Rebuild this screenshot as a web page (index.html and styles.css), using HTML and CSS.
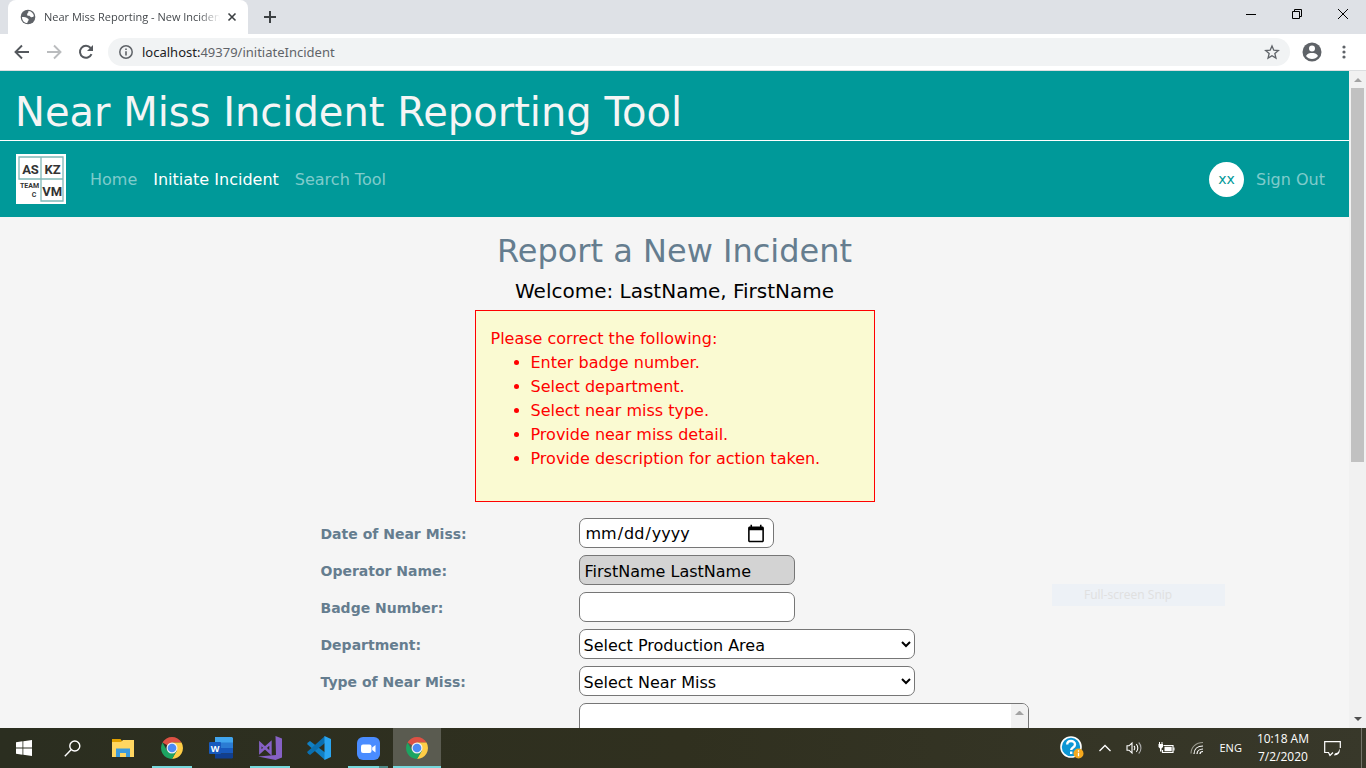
FILE: index.html
```html
<!DOCTYPE html>
<html lang="en">
<head>
<meta charset="utf-8">
<title>Near Miss Reporting - New Incident</title>
<link rel="stylesheet" href="styles.css">
</head>
<body>
<svg class="defs" aria-hidden="true">
  <symbol id="chrome" viewBox="0 0 24 24">
    <path fill="#dd5144" d="M12 12 2.5 6.5A11 11 0 0 1 21.500 6.500L12 6.500z"/>
    <path fill="#ffcd46" d="M12 6.500H21.500A11 11 0 0 1 12 23L16.800 14.800z"/>
    <path fill="#1da462" d="M2.500 6.500A11 11 0 0 0 12 23L16.800 14.800 12 17.500 7.200 14.700z"/>
    <circle cx="12" cy="12" r="5.500" fill="#f1f1f1"/>
    <circle cx="12" cy="12" r="4.300" fill="#4c8bf5"/>
  </symbol>
</svg>

<header class="tabstrip">
  <div class="tab">
    <svg class="favicon" viewBox="0 0 24 24"><circle cx="12" cy="12" r="11" fill="#5f6368"/><path fill="#fff" d="M3 12c2 0 5-.5 7 1 1.500 1.500 3 1 3 3s-2 2-2 5C6 21 3 17 3 12zM12 3c5 0 8 3 9 8-2 1-3 2-5 1-1-1-1-2-3-2s-3-1-2-3 3-2 1-4z"/></svg>
    <span class="tab-title">Near Miss Reporting - New Incident</span>
    <button class="icon-btn tab-close" aria-label="Close tab"><svg width="10" height="10" viewBox="0 0 10 10"><path d="M1.500 1.500l7 7M8.500 1.500l-7 7" stroke="#3c4043" stroke-width="1.600"/></svg></button>
  </div>
  <button class="icon-btn new-tab" aria-label="New tab"><svg width="12" height="12" viewBox="0 0 12 12"><path d="M6 0v12M0 6h12" stroke="#3c4043" stroke-width="2"/></svg></button>
  <div class="window-controls">
    <button class="icon-btn" aria-label="Minimize"><svg width="10" height="10" viewBox="0 0 10 10"><path d="M0 5.500h10" stroke="#000"/></svg></button>
    <button class="icon-btn" aria-label="Restore"><svg width="10" height="10" viewBox="0 0 10 10"><path d="M.5 2.500h7v7h-7zM2.500 2.500v-2h7v7h-2" fill="none" stroke="#000"/></svg></button>
    <button class="icon-btn" aria-label="Close"><svg width="10" height="10" viewBox="0 0 10 10"><path d="M0 0l10 10M10 0L0 10" stroke="#000"/></svg></button>
  </div>
</header>

<div class="toolbar">
  <button class="icon-btn nav-btn" aria-label="Back"><svg width="16" height="16" viewBox="0 0 16 16"><path d="M15 8H2M8 1.500L1.500 8 8 14.500" fill="none" stroke="#54585d" stroke-width="1.900"/></svg></button>
  <button class="icon-btn nav-btn" aria-label="Forward"><svg width="16" height="16" viewBox="0 0 16 16"><path d="M1 8h13M8 1.500L14.500 8 8 14.500" fill="none" stroke="#babcbe" stroke-width="1.900"/></svg></button>
  <button class="icon-btn nav-btn" aria-label="Reload"><svg width="16" height="16" viewBox="0 0 16 16"><path d="M13.500 10.200A6 6 0 1 1 12.600 4" fill="none" stroke="#54585d" stroke-width="2"/><path d="M15 1v6H9z" fill="#54585d"/></svg></button>
  <div class="address">
    <svg width="14" height="14" viewBox="0 0 14 14"><circle cx="7" cy="7" r="6.200" fill="none" stroke="#5f6368" stroke-width="1.500"/><path d="M7 6.200v4.200M7 3.500v1.600" stroke="#5f6368" stroke-width="1.600"/></svg>
    <span class="url"><b>localhost:</b>49379/initiateIncident</span>
    <button class="icon-btn star" aria-label="Bookmark"><svg width="16" height="16" viewBox="0 0 24 24"><path d="M12 3l2.700 6.300 6.800.6-5.200 4.500 1.600 6.700-5.900-3.600-5.900 3.600 1.600-6.700-5.200-4.500 6.800-.6z" fill="none" stroke="#5f6368" stroke-width="2"/></svg></button>
  </div>
  <button class="icon-btn profile" aria-label="Profile"><svg width="20" height="20" viewBox="0 0 20 20"><circle cx="10" cy="10" r="9.500" fill="#5f6368"/><circle cx="10" cy="6.500" r="3" fill="#fff"/><path d="M4 14c1-2.500 4-3 6-3s5 .5 6 3c-1.500 2-3.500 3-6 3s-4.500-1-6-3z" fill="#fff"/></svg></button>
  <button class="icon-btn menu" aria-label="Menu"><svg width="4" height="14" viewBox="0 0 4 14"><g fill="#5f6368"><circle cx="2" cy="2" r="1.600"/><circle cx="2" cy="7" r="1.600"/><circle cx="2" cy="12" r="1.600"/></g></svg></button>
</div>

<div class="viewport">
  <div class="page">
    <div class="banner"><h1>Near Miss Incident Reporting Tool</h1></div>
    <nav class="navbar">
      <a class="brand" href="#" aria-label="Team C">
        <svg width="50" height="50" viewBox="0 0 50 50"><rect width="50" height="50" fill="#fff"/><path d="M3 3h44v44H25V25H3zM25 3v22h22" fill="none" stroke="#7fb9b8" stroke-width="1.300"/><g class="logo-text"><text x="14.500" y="20" class="logo-big">AS</text><text x="36.500" y="20" class="logo-big">KZ</text><text x="36.300" y="42" class="logo-big">VM</text><text x="13.500" y="34" class="logo-small">TEAM</text><text x="18" y="43" class="logo-small">C</text></g></svg>
      </a>
      <a class="nav-link" href="#">Home</a>
      <a class="nav-link active" href="#">Initiate Incident</a>
      <a class="nav-link" href="#">Search Tool</a>
      <span class="avatar">XX</span>
      <a class="nav-link sign-out" href="#">Sign Out</a>
    </nav>
    <main>
      <h2>Report a New Incident</h2>
      <p class="welcome">Welcome: LastName, FirstName</p>
      <div class="errors">
        Please correct the following:
        <ul>
          <li>Enter badge number.</li>
          <li>Select department.</li>
          <li>Select near miss type.</li>
          <li>Provide near miss detail.</li>
          <li>Provide description for action taken.</li>
        </ul>
      </div>
      <form class="form">
        <label for="date">Date of Near Miss:</label>
        <input class="field date" id="date" type="date">
        <label for="operator">Operator Name:</label>
        <input class="field text readonly" id="operator" type="text" value="FirstName LastName" readonly>
        <label for="badge">Badge Number:</label>
        <input class="field text" id="badge" type="text">
        <label for="department">Department:</label>
        <select class="field select" id="department"><option>Select Production Area</option></select>
        <label for="type">Type of Near Miss:</label>
        <select class="field select" id="type"><option>Select Near Miss</option></select>
        <div class="detail">
          <textarea aria-label="Near miss detail"></textarea>
          <div class="detail-bar"><i class="arrow up"></i></div>
        </div>
      </form>
    </main>
  </div>
  <div class="scrollbar"><i class="arrow up"></i><div class="track"><div class="thumb"></div></div><i class="arrow down"></i></div>
  <div class="snip">Full-screen Snip</div>
</div>

<footer class="taskbar">
  <button class="task" aria-label="Start"><svg width="16" height="16" viewBox="0 0 16 16"><path fill="#fff" d="M0 2.200l6.500-.9v6.200H0zM7.300 1.200L16 0v7.500H7.300zM0 8.400h6.500v6.300L0 13.800zM7.300 8.400H16V16l-8.700-1.200z"/></svg></button>
  <button class="task" aria-label="Search"><svg width="17" height="17" viewBox="0 0 17 17"><circle cx="10.800" cy="6" r="5" fill="none" stroke="#fff" stroke-width="1.400"/><path d="M7.300 9.600L.8 16.200" stroke="#fff" stroke-width="1.400"/></svg></button>
  <div class="pinned">
    <button class="task" aria-label="File Explorer"><svg width="22" height="20" viewBox="0 0 22 20"><path fill="#e2a100" d="M0 1h8.500l1.500 2v4H0z"/><path fill="#ffd661" d="M0 4h9l2-2h11v17H0z"/><path fill="#3d9bdc" d="M4 19v-8.500h14V19h-4v-4H8v4z"/></svg></button>
    <button class="task running" aria-label="Chrome"><svg width="24" height="24"><use href="#chrome"/></svg></button>
    <button class="task" aria-label="Word"><svg width="24" height="22" viewBox="0 0 24 22"><path fill="#41a5ee" d="M6 0h17l1 1v5H6z"/><path fill="#2b7cd3" d="M6 5.500h18V11H6z"/><path fill="#185abd" d="M6 11h18v5.500H6z"/><path fill="#103f91" d="M6 16.500h18V21l-1 .500H6z"/><rect y="5" width="12" height="12" rx="1" fill="#185abd"/><text x="6" y="14.500" class="word-letter">W</text></svg></button>
    <button class="task running" aria-label="Visual Studio"><svg width="24" height="24" viewBox="0 0 24 24"><path fill="#8661c5" d="M17.500 0L24 2.500v19L17.500 24 0 20.500l18-1.500z"/><path d="M2.300 7.500v8.500l10.200-9v10z" fill="none" stroke="#8661c5" stroke-width="2.400"/></svg></button>
    <button class="task" aria-label="Visual Studio Code"><svg width="24" height="24" viewBox="0 0 24 24"><path fill="#1180c4" d="M1 6.500L3 5l15 11.500V24L0 8z"/><path fill="#0a6fb0" d="M1 17.500L3 19 18 7V0L0 16z"/><path fill="#2aa5f0" d="M17.500 0L24 3v18l-6.500 3z"/></svg></button>
    <button class="task running grouped" aria-label="Zoom"><svg width="23" height="23" viewBox="0 0 23 23"><rect width="23" height="23" rx="6" fill="#4a8cff"/><rect x="4" y="7.500" width="10.500" height="8.500" rx="2" fill="#fff"/><path fill="#fff" d="M15.200 10.500l3.300-2.500v7.500l-3.300-2.500z"/></svg></button>
    <button class="task current" aria-label="Chrome, active window"><svg width="24" height="24"><use href="#chrome"/></svg></button>
  </div>
  <div class="tray">
    <svg width="24" height="24" viewBox="0 0 24 24"><circle cx="11" cy="11" r="10" fill="#0d96d4" stroke="#fff" stroke-width="1.600"/><path d="M7.200 8.500C7.200 6 9 5 11 5s4 1.200 4 3.500c0 3-3.800 2.800-3.800 5.500M11.200 15.500v2.500" fill="none" stroke="#fff" stroke-width="2.400"/><circle cx="18.500" cy="17.500" r="5" fill="#f5a81c"/><path d="M18.500 16.800v3.500M18.500 14.200v1.500" stroke="#fff" stroke-width="1.300"/></svg>
    <svg width="12" height="8" viewBox="0 0 12 8"><path d="M.5 7L6 1.500 11.500 7" fill="none" stroke="#fff" stroke-width="1.300"/></svg>
    <svg width="17" height="14" viewBox="0 0 17 14"><path d="M1 4.800h2L6 2v10L3 9.200H1z" fill="none" stroke="#fff" stroke-width="1.100"/><path d="M8 5c1 1 1 3 0 4M10.300 3.200c2 2 2 5.600 0 7.600" fill="none" stroke="#fff" stroke-width="1.100"/><path d="M12.700 1.500c3 3 3 8 0 11" fill="none" stroke="#aaa" stroke-width="1.100"/></svg>
    <svg width="17" height="12" viewBox="0 0 17 12"><path d="M5.500 3.500h9.500v7H4.500V8" fill="none" stroke="#fff" stroke-width="1.200"/><path fill="#fff" d="M6.500 4.800h7.200v4.500H6.500zM15.300 5.500h1.200v3h-1.200zM.5 2h4.500v3L3.500 6.500v3H2v-3L.5 5zM1 0h1v2H1zM3.500 0h1v2h-1z"/></svg>
    <svg width="14" height="14" viewBox="0 0 14 14"><path d="M1 12.500C1 6 6 1.500 13 1.500" fill="none" stroke="#9b9b90" stroke-width="1.100"/><path d="M4 13c0-5 3.500-8 9-8M7 13c0-3 2.500-5 6-5M10 13c0-1.500 1-2.500 3-2.500" fill="none" stroke="#fff" stroke-width="1.200"/></svg>
    <span class="lang">ENG</span>
    <span class="clock">10:18 AM<br>7/2/2020</span>
    <svg width="17" height="17" viewBox="0 0 17 17"><path d="M9 12.500L6 15.500 4.500 12.500H.7V1.700h15.600V8" fill="none" stroke="#fff" stroke-width="1.200"/><path fill="#fff" d="M15.500 8.500c1 4-1 7-5.500 7 .5-1.500 1-2.500 2-2.500 2 0 3-2 3.500-4.500z"/></svg>
  </div>
</footer>
</body>
</html>
```
FILE: styles.css
```css
* { box-sizing: border-box; }

body {
  margin: 0;
  height: 100vh;
  display: flex;
  flex-direction: column;
  overflow: hidden;
  font-family: Verdana, "DejaVu Sans", sans-serif;
  font-size: 16px;
  line-height: 24px;
  color: #000;
}

.defs { display: none; }
svg { display: block; flex: none; }
a { text-decoration: none; }

.icon-btn {
  display: flex;
  align-items: center;
  justify-content: center;
  flex: none;
  padding: 0;
  border: 0;
  background: none;
}

/* Browser tab strip */
.tabstrip {
  display: flex;
  flex: none;
  height: 34px;
  padding-left: 8px;
  background: #dee1e6;
  font-family: "Open Sans", "Noto Sans", sans-serif;
}
.tab {
  display: flex;
  align-items: center;
  width: 240px;
  padding: 0 10px 0 12px;
  border-radius: 8px 8px 0 0;
  background: #fff;
}
.favicon { width: 16px; height: 16px; }
.tab-title {
  flex: 1;
  margin: 0 6px 0 8px;
  overflow: hidden;
  white-space: nowrap;
  font-size: 11px;
  color: #45494d;
  mask-image: linear-gradient(to right, #000 88%, transparent);
}
.tab-close { width: 12px; }
.new-tab { width: 44px; }
.window-controls { display: flex; margin-left: auto; padding-bottom: 6px; }
.window-controls .icon-btn { width: 46px; }

/* Browser toolbar */
.toolbar {
  display: flex;
  align-items: center;
  flex: none;
  height: 37px;
  padding: 0 8px 0 6px;
  border-bottom: 1px solid #dcdee0;
  background: #fff;
}
.nav-btn { width: 32px; height: 32px; }
.address {
  display: flex;
  align-items: center;
  flex: 1;
  height: 28px;
  margin-left: 6px;
  padding: 0 10px 0 11px;
  border-radius: 14px;
  background: #f1f3f4;
}
.url {
  margin-left: 9px;
  font: 13px/20px "Noto Sans", sans-serif;
  color: #5f6368;
}
.url b { font-weight: 400; color: #202124; }
.star { margin-left: auto; }
.profile { margin-left: 12px; }
.menu { width: 28px; margin-left: 8px; }

/* Page area */
.viewport {
  position: relative;
  display: flex;
  flex: 1;
  min-height: 0;
}
.page {
  flex: 1;
  overflow: hidden;
  background: #f5f5f5;
}
.banner {
  padding: 17px 15px 3px;
  border-bottom: 1px solid #fff;
  background: #099;
}
h1 {
  margin: 0;
  font-size: 40px;
  font-weight: 400;
  line-height: 49px;
  color: #f5f5f5;
}
.navbar {
  display: flex;
  align-items: center;
  min-height: 76px;
  padding: 0 16px;
  background: #099;
}
.brand { margin-right: 16px; }
.nav-link { padding: 9px 8px 7px; color: rgba(255, 255, 255, 0.5); }
.nav-link.active { color: #fff; }
.avatar {
  width: 35px;
  margin-left: auto;
  border-radius: 50%;
  background: #fff;
  color: #099;
  font-size: 14px;
  line-height: 35px;
  text-align: center;
  text-transform: lowercase;
}
.sign-out { margin-left: 4px; }
.logo-text {
  font-family: Roboto, "Liberation Sans", sans-serif;
  font-weight: 700;
  text-anchor: middle;
  fill: #333;
}
.logo-big { font-size: 13px; }
.logo-small { font-size: 7px; }

main { padding-top: 15px; }
h2 {
  margin: 0 0 9px;
  font-size: 32px;
  font-weight: 400;
  line-height: 38px;
  text-align: center;
  color: #657d8f;
}
.welcome {
  margin: 0 0 7px;
  font-size: 20px;
  line-height: 24px;
  text-align: center;
}
.errors {
  width: 400px;
  margin: 0 auto 16px;
  padding: 16px 15px 14px;
  border: 1px solid #f00;
  background: #fafad2;
  color: #f00;
}
.errors ul { margin: 0 0 16px; padding-left: 40px; }

.form {
  display: grid;
  grid-template-columns: 258px 450px;
  justify-content: center;
  justify-items: start;
  align-items: center;
  row-gap: 7px;
}
.form label {
  padding-top: 2px;
  font-size: 14px;
  font-weight: 700;
  color: #657d8f;
}
.field {
  height: 30px;
  margin: 0;
  border: 1px solid #767676;
  border-radius: 7px;
  background: #fff;
  color: #000;
  font: inherit;
}
.date { width: 195px; padding: 2px 7px 0 5px; }
.date::-webkit-calendar-picker-indicator { width: 20px; height: 20px; padding: 0; }
.text { width: 216px; padding: 3px 5px 1px; }
.readonly { background: #d3d3d3; }
.select { width: 336px; padding: 2px 0 0; }
.detail {
  grid-column: 2;
  display: flex;
  width: 100%;
  height: 104px;
  overflow: hidden;
  border: 1px solid #767676;
  border-radius: 7px;
  background: #fff;
}
.detail textarea {
  flex: 1;
  border: 0;
  outline: 0;
  resize: none;
  background: none;
  font: inherit;
}
.detail-bar { width: 17px; padding: 7px 4px; background: #f1f1f1; }

.scrollbar {
  display: flex;
  flex-direction: column;
  align-items: center;
  flex: none;
  width: 17px;
  padding: 7px 0;
  background: #f1f1f1;
}
.track { flex: 1; margin: 6px 0; }
.thumb { width: 13px; height: 60%; background: #c1c1c1; }
.arrow { display: block; border: 4px solid transparent; }
.arrow.up { border-top: 0; border-bottom-color: #a3a3a3; }
.arrow.down { border-bottom: 0; border-top-color: #505050; }

/* Fading snipping-tool menu item above the page */
.snip {
  position: absolute;
  right: 141px;
  bottom: 122px;
  width: 173px;
  padding-left: 32px;
  background: #edf1f6;
  color: #e0e0e0;
  font: 12px/22px "Open Sans", "Noto Sans", sans-serif;
}

/* Taskbar */
.taskbar {
  display: flex;
  flex: none;
  height: 40px;
  background: linear-gradient(to right, #2b2e20, #30301f 50%, #38382a);
  font-family: "Open Sans", "Noto Sans", sans-serif;
}
.task {
  display: flex;
  align-items: center;
  justify-content: center;
  width: 48px;
  height: 40px;
  padding: 0;
  border: 0;
  background: none;
}
.pinned { display: flex; gap: 1px; margin-left: 3px; }
.word-letter {
  font: 700 9px "Open Sans", sans-serif;
  text-anchor: middle;
  fill: #fff;
}
.running {
  background: linear-gradient(#76d8dc, #76d8dc) center bottom / 40px 2px no-repeat;
}
.grouped {
  background-image: linear-gradient(to right, #76d8dc 31px, #4d8a87 31px);
}
.current { border-bottom: 2px solid #76d8dc; padding-top: 2px; background: #5a5b50; }
.tray {
  display: flex;
  align-items: center;
  gap: 15px;
  margin-left: auto;
  margin-right: 4px;
  padding-right: 20px;
  border-right: 1px solid #74746a;
  color: #fff;
  font-size: 12px;
}
.lang { font-size: 11px; }
.clock { line-height: 18px; text-align: center; }
```
